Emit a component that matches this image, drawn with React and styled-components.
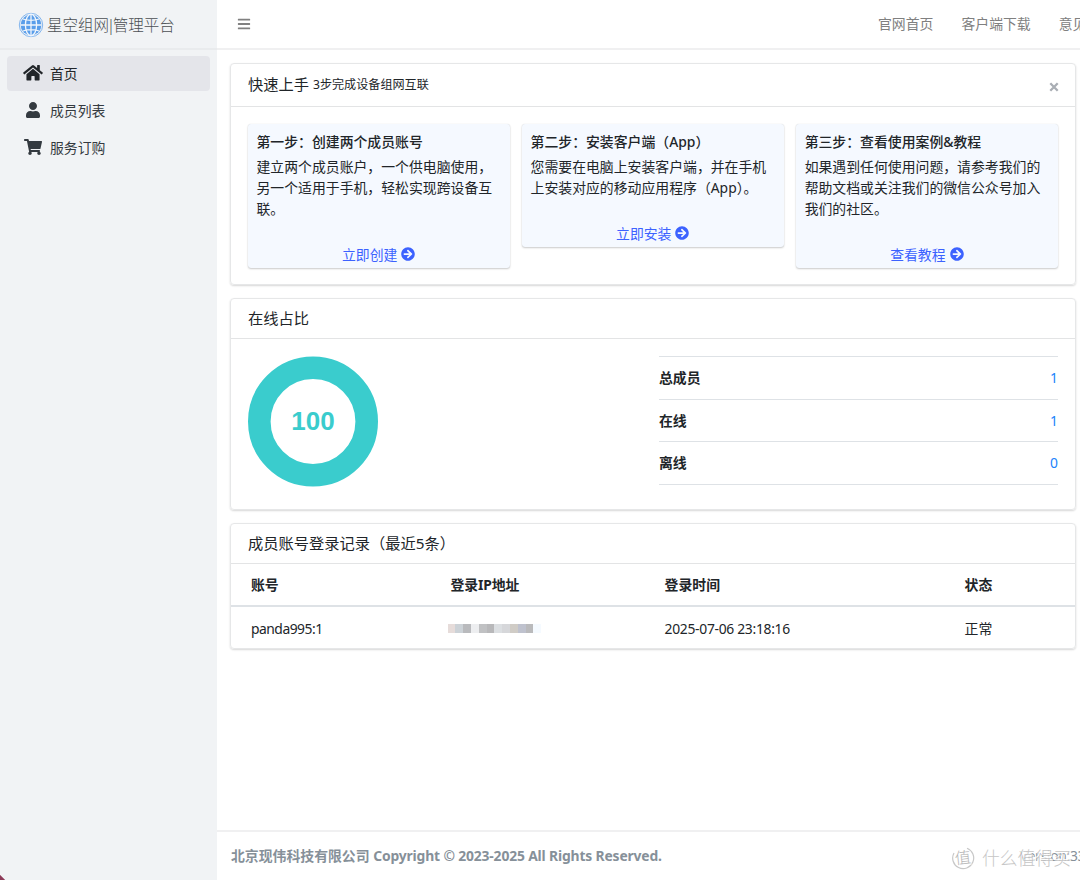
import React from 'react';
import styled, {createGlobalStyle} from 'styled-components';
import {FaHome, FaUser, FaShoppingCart, FaBars, FaArrowCircleRight} from 'react-icons/fa';

const GlobalStyle = createGlobalStyle`
    * {
        box-sizing: border-box;
    }
    body {
        margin: 0;
        overflow: hidden;
        background-color: #fff;
        color: #212529;
        font-family: "Noto Sans", "Noto Sans CJK SC", sans-serif;
        font-size: 13.87px;
        line-height: 21px;
    }
`;
const Page = styled.div`
    position: relative;
    display: flex;
    width: 1080px;
    height: 880px;
    overflow: hidden;
`;
const Sidebar = styled.aside`
    flex: none;
    width: 217px;
    background-color: #f1f3f5;
`;
const Brand = styled.div`
    display: flex;
    align-items: center;
    height: 50px;
    padding: 2px 0 0 18px;
    border-bottom: 2px solid #e9ebed;
    color: #4b4f53;
    font-size: 15.5px;
    font-weight: 300;
    white-space: nowrap;

    svg {
        flex: none;
        margin-right: 3px;
    }
`;
const Bar = styled.span`
    margin: 0 -2.4px;
`;
const Menu = styled.nav`
    display: flex;
    flex-direction: column;
    gap: 2px;
    padding: 6px 7px;
`;
const MenuItem = styled.a`
    display: flex;
    align-items: center;
    height: 35.2px;
    padding-left: 16px;
    border-radius: 4px;
    color: ${props => props.$active ? '#212529' : '#343a40'};
    background-color: ${props => props.$active ? '#e4e5ea' : 'transparent'};

    svg {
        width: 20px;
        margin: -1px 7px 0 0;
    }
    span {
        margin-top: ${props => props.$active ? -1 : 0}px;
    }
`;
const Main = styled.div`
    flex: none;
    display: flex;
    flex-direction: column;
    width: 875px;
    height: 880px;
`;
const TopBar = styled.header`
    display: flex;
    align-items: center;
    height: 50px;
    padding: 0 0 1px 20px;
    border-bottom: 2px solid #f0f0f1;
    color: #808080;
    white-space: nowrap;

    svg {
        flex: none;
    }
`;
const TopLinks = styled.div`
    display: flex;
    gap: 28px;
    margin-left: 627px;
`;
const Content = styled.main`
    flex: 1;
    display: flex;
    flex-direction: column;
    gap: 13px;
    width: 859px;
    padding: 13px 0 0 13px;
`;
const Card = styled.section`
    height: ${props => props.$height}px;
    border: 1px solid #e6e7e8;
    border-radius: 4px;
    box-shadow: 0 1px 2px rgba(0, 0, 0, .16);
`;
const CardHeader = styled.div`
    display: flex;
    align-items: center;
    height: ${props => props.$height}px;
    padding: 0 17px 1px;
    border-bottom: 1px solid #e3e4e5;
    font-size: 15.25px;

    small {
        margin-left: 4px;
        font-size: 12.1px;
    }
`;
const Close = styled.button`
    margin: 5px -1px 0 auto;
    padding: 0;
    border: none;
    background: none;
    line-height: 0;
`;
const Steps = styled.div`
    display: flex;
    align-items: flex-start;
    gap: 11.7px;
    padding: 17px 16.5px;
`;
const Step = styled.div`
    width: 262.4px;
    padding: 6.5px 9px 3.5px;
    border-radius: 3px;
    background-color: #f5f9ff;
    box-shadow: 0 0 1px rgba(0, 0, 0, .14), 0 1px 2px rgba(0, 0, 0, .2);
`;
const StepTitle = styled.div`
    margin-bottom: 4px;
    font-weight: 500;
`;
const StepText = styled.div`
    margin-bottom: 25px;
    white-space: nowrap;
`;
const StepLink = styled.a`
    display: flex;
    justify-content: center;
    align-items: center;
    gap: 4px;
    color: #3c62ff;
`;
const Online = styled.div`
    display: flex;
    justify-content: space-between;
    padding: 17px 17px 0;
`;
const Stats = styled.div`
    width: 399px;
    border-top: 1px solid #dee2e6;
`;
const StatRow = styled.div`
    display: flex;
    justify-content: space-between;
    align-items: center;
    height: 42.6px;
    border-bottom: 1px solid #dee2e6;
    font-weight: 700;

    span {
        color: #2083fb;
        font-weight: 400;
    }
`;
const TableRow = styled.div`
    display: grid;
    grid-template-columns: 199.6px 214px 300px 1fr;
    align-items: center;
    height: ${props => props.$head ? 43 : 42}px;
    padding-left: 20px;
    border-bottom: ${props => props.$head ? '2px solid #dee2e6' : 'none'};
    font-weight: ${props => props.$head ? 700 : 400};
`;
const Latin = styled.span`
    letter-spacing: ${props => props.$tight}px;
`;
const Mosaic = styled.div`
    display: flex;
    margin-left: -3px;
`;
const Block = styled.i`
    width: 7.8px;
    height: 9px;
    background-color: ${props => props.$color};
`;
const Footer = styled.footer`
    display: flex;
    align-items: center;
    height: 50px;
    padding: 0 0 1px 14px;
    border-top: 2px solid #f0f0f1;
    color: #869099;
    font-weight: 700;
    white-space: nowrap;
`;
const Version = styled.span`
    margin-left: 358px;
    font-weight: 400;
    letter-spacing: -.3px;
`;
const Watermark = styled.div`
    position: absolute;
    left: 951px;
    top: 846px;
    display: flex;
    align-items: center;
    gap: 7px;
    color: #c6c6c6;
    font-size: 17.8px;
    font-weight: 300;
    line-height: 24px;
    white-space: nowrap;
    text-shadow: 1px 1px 0 #fff, -1px -1px 0 #fff;
`;
const Corner = styled.div`
    position: absolute;
    left: 0;
    bottom: 0;
    width: 5px;
    height: 5px;
    background: linear-gradient(45deg, #8d3a58 45%, transparent 60%);
`;

const steps = [
    {
        title: '第一步：创建两个成员账号',
        lines: ['建立两个成员账户，一个供电脑使用，', '另一个适用于手机，轻松实现跨设备互', '联。'],
        link: '立即创建',
    },
    {
        title: '第二步：安装客户端（App）',
        lines: ['您需要在电脑上安装客户端，并在手机', '上安装对应的移动应用程序（App）。'],
        link: '立即安装',
    },
    {
        title: '第三步：查看使用案例&教程',
        lines: ['如果遇到任何使用问题，请参考我们的', '帮助文档或关注我们的微信公众号加入', '我们的社区。'],
        link: '查看教程',
    },
];

const stats = [['总成员', 1], ['在线', 1], ['离线', 0]];

const mosaic = ['#e6dcda', '#ccd2d7', '#b9babd', '#edeef0', '#c0c1c3', '#b8b8ba', '#dcdfe2', '#d6d7da', '#d0ccc6', '#bfc2ce', '#bababc', '#f5faff'];

const Globe = () => (
    <svg width='26' height='26' viewBox='0 0 26 26' fill='none'>
        <circle cx='13' cy='13' r='11.7' stroke='#82b5ee' strokeWidth='1'/>
        <circle cx='13' cy='13' r='10.4' fill='#5a9eea'/>
        <g stroke='#f1f6fc' strokeWidth='1.3'>
            <path d='M13 2.5v21M2.5 13h21M5 7q8 2.6 16 0M5 19q8-2.6 16 0'/>
            <ellipse cx='13' cy='13' rx='5.6' ry='10.8'/>
        </g>
    </svg>
)

const Donut = () => (
    <svg width='130' height='131' viewBox='0 0 130 131'>
        <circle cx='65' cy='65.5' r='53.7' fill='none' stroke='#3acccd' strokeWidth='22.6'/>
        <text x='65' y='74' textAnchor='middle' fill='#3acccd' fontSize='26' fontWeight='700'
            fontFamily='"Liberation Sans", sans-serif'>100</text>
    </svg>
)

const App = () => {
    return (
        <Page>
            <GlobalStyle/>
            <Sidebar>
                <Brand><Globe/>星空组网<Bar>|</Bar>管理平台</Brand>
                <Menu>
                    <MenuItem $active><FaHome size={17.5}/><span>首页</span></MenuItem>
                    <MenuItem><FaUser size={16}/><span>成员列表</span></MenuItem>
                    <MenuItem><FaShoppingCart size={16}/><span>服务订购</span></MenuItem>
                </Menu>
            </Sidebar>
            <Main>
                <TopBar>
                    <FaBars size={14}/>
                    <TopLinks>
                        <span>官网首页</span>
                        <span>客户端下载</span>
                        <span>意见反馈</span>
                    </TopLinks>
                </TopBar>
                <Content>
                    <Card $height={222}>
                        <CardHeader $height={43}>
                            快速上手 <small>3步完成设备组网互联</small>
                            <Close aria-label='关闭'>
                                <svg width='10' height='10' viewBox='0 0 10 10'>
                                    <path d='M1.3 1.3l7.4 7.4M8.7 1.3L1.3 8.7' stroke='#a9aeb4' strokeWidth='2.3'/>
                                </svg>
                            </Close>
                        </CardHeader>
                        <Steps>
                            {steps.map(step => (
                                <Step key={step.title}>
                                    <StepTitle>{step.title}</StepTitle>
                                    <StepText>
                                        {step.lines.map(line => <div key={line}>{line}</div>)}
                                    </StepText>
                                    <StepLink>{step.link}<FaArrowCircleRight size={14}/></StepLink>
                                </Step>
                            ))}
                        </Steps>
                    </Card>
                    <Card $height={212}>
                        <CardHeader $height={40}>在线占比</CardHeader>
                        <Online>
                            <Donut/>
                            <Stats>
                                {stats.map(([label, value]) => (
                                    <StatRow key={label}>{label}<span>{value}</span></StatRow>
                                ))}
                            </Stats>
                        </Online>
                    </Card>
                    <Card $height={126}>
                        <CardHeader $height={40}>成员账号登录记录（最近5条）</CardHeader>
                        <TableRow $head>
                            <span>账号</span>
                            <Latin $tight={-.15}>登录IP地址</Latin>
                            <span>登录时间</span>
                            <span>状态</span>
                        </TableRow>
                        <TableRow>
                            <Latin $tight={-.5}>panda995:1</Latin>
                            <Mosaic>
                                {mosaic.map(color => <Block key={color} $color={color}/>)}
                            </Mosaic>
                            <Latin $tight={-.3}>2025-07-06 23:18:16</Latin>
                            <span>正常</span>
                        </TableRow>
                    </Card>
                </Content>
                <Footer>
                    <span>北京现伟科技有限公司 <Latin $tight={-.15}>Copyright © 2023-2025 All Rights Reserved.</Latin></span>
                    <Version>Version:33.1</Version>
                </Footer>
            </Main>
            <Watermark>
                <svg width='24' height='24' viewBox='0 0 24 24' fill='none'>
                    <path d='M16 2.3A10.5 10.5 0 1 1 3 7' stroke='#c8c8c8' strokeWidth='1.2'/>
                    <text x='12' y='17.5' textAnchor='middle' fill='#b4b4b4' fontSize='16'
                        transform='rotate(-6 12 12)'
                        fontFamily='"Noto Sans CJK SC", sans-serif'>值</text>
                </svg>
                什么值得买
            </Watermark>
            <Corner/>
        </Page>
    )
}

export default App
